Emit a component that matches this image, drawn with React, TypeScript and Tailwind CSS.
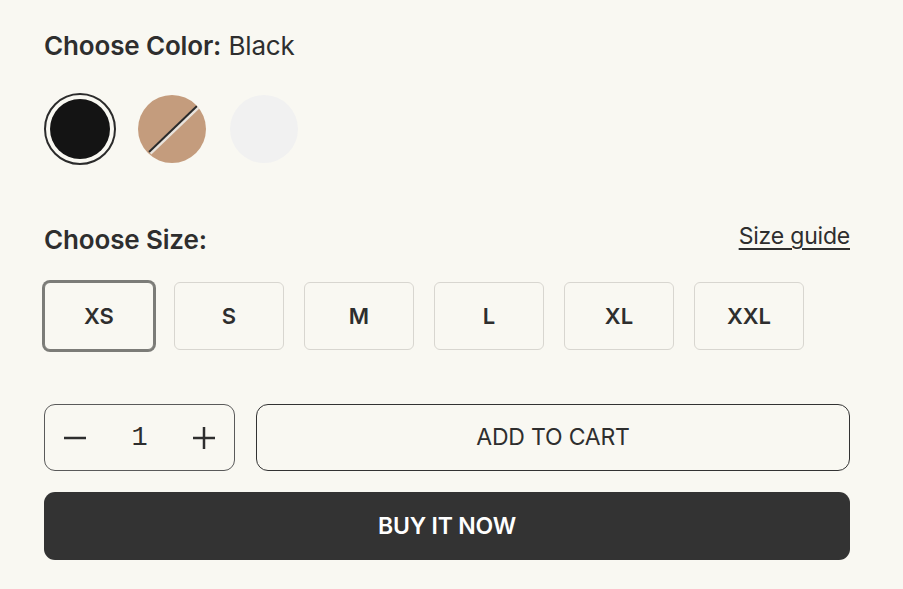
import React, { useState } from "react";

const sans = { fontFamily: 'Inter, "Liberation Sans", Arial, sans-serif' };
const mono = { fontFamily: '"Liberation Mono", "Courier New", monospace' };

const sizes = ["XS", "S", "M", "L", "XL", "XXL"];

export default function App() {
  const [size, setSize] = useState("XS");
  const [qty, setQty] = useState(1);

  return (
    <div className="min-h-[589px] w-full bg-[#f9f8f2] text-[#2e2e2e]" style={sans}>
      <div className="w-[806px] ml-[44px] pt-[31px]">
        {/* Colour picker */}
        <h2 className="text-[26px] leading-[30px] tracking-[-0.15px]">
          <span className="font-semibold">Choose Color:</span> <span>Black</span>
        </h2>
        <div className="mt-[32px] flex gap-[20px]">
          <button className="w-[72px] h-[72px] rounded-full border-2 border-[#2b2b2b] p-[4px]">
            <span className="block w-full h-full rounded-full bg-[#141414]" />
          </button>
          <button className="relative w-[72px] h-[72px] rounded-full border-2 border-transparent">
            <span className="block w-full h-full rounded-full bg-[#c49c7d] overflow-hidden relative">
              <svg className="absolute inset-0" width="68" height="68" viewBox="0 0 68 68">
                <line x1="60" y1="12" x2="12" y2="58" stroke="#e9e3dc" strokeWidth="4" />
                <line x1="59" y1="11" x2="11" y2="57" stroke="#2a2a2a" strokeWidth="2" />
              </svg>
            </span>
          </button>
          <button className="w-[72px] h-[72px] rounded-full border-2 border-transparent">
            <span className="block w-full h-full rounded-full bg-[#f1f1f1]" />
          </button>
        </div>

        {/* Size picker */}
        <div className="mt-[57px] flex items-end justify-between">
          <h2 className="text-[26px] leading-[30px] font-semibold tracking-[-0.15px]">Choose Size:</h2>
          <a href="#" className="text-[23px] leading-[28px] underline underline-offset-[4px] decoration-[1.5px] mb-[5px] tracking-[-0.2px]">
            Size guide
          </a>
        </div>
        <div className="mt-[27px] flex gap-[20px]">
          {sizes.map((s) => (
            <button
              key={s}
              onClick={() => setSize(s)}
              className={
                s === size
                  ? "w-[110px] h-[68px] rounded-[6px] border border-[#7c7c78] ring-2 ring-[#7c7c78] bg-[#f9f8f2] text-[22px] font-semibold"
                  : "w-[110px] h-[68px] rounded-[6px] border border-[#d8d6d0] bg-[#f9f8f2] text-[22px] font-semibold"
              }
            >
              {s}
            </button>
          ))}
        </div>

        {/* Quantity + cart */}
        <div className="mt-[54px] flex gap-[21px]">
          <div className="w-[191px] h-[67px] rounded-[11px] border border-[#5a5a5a] flex items-center justify-between px-[18px]">
            <button onClick={() => setQty(Math.max(1, qty - 1))} className="w-[24px] h-[24px] flex items-center justify-center">
              <svg width="24" height="24" viewBox="0 0 24 24">
                <line x1="1" y1="12" x2="23" y2="12" stroke="#2e2e2e" strokeWidth="2.5" />
              </svg>
            </button>
            <span className="text-[27px] pt-[2px]" style={mono}>{qty}</span>
            <button onClick={() => setQty(qty + 1)} className="w-[24px] h-[24px] flex items-center justify-center">
              <svg width="24" height="24" viewBox="0 0 24 24">
                <line x1="1" y1="12" x2="23" y2="12" stroke="#2e2e2e" strokeWidth="2.5" />
                <line x1="12" y1="1" x2="12" y2="23" stroke="#2e2e2e" strokeWidth="2.5" />
              </svg>
            </button>
          </div>
          <button className="flex-1 h-[67px] rounded-[12px] border border-[#333] text-[23px] tracking-[-0.2px]">
            ADD TO CART
          </button>
        </div>
        <button className="mt-[21px] w-full h-[68px] rounded-[11px] bg-[#333333] text-white text-[23px] font-semibold tracking-[-0.2px]">
          BUY IT NOW
        </button>
      </div>
    </div>
  );
}
